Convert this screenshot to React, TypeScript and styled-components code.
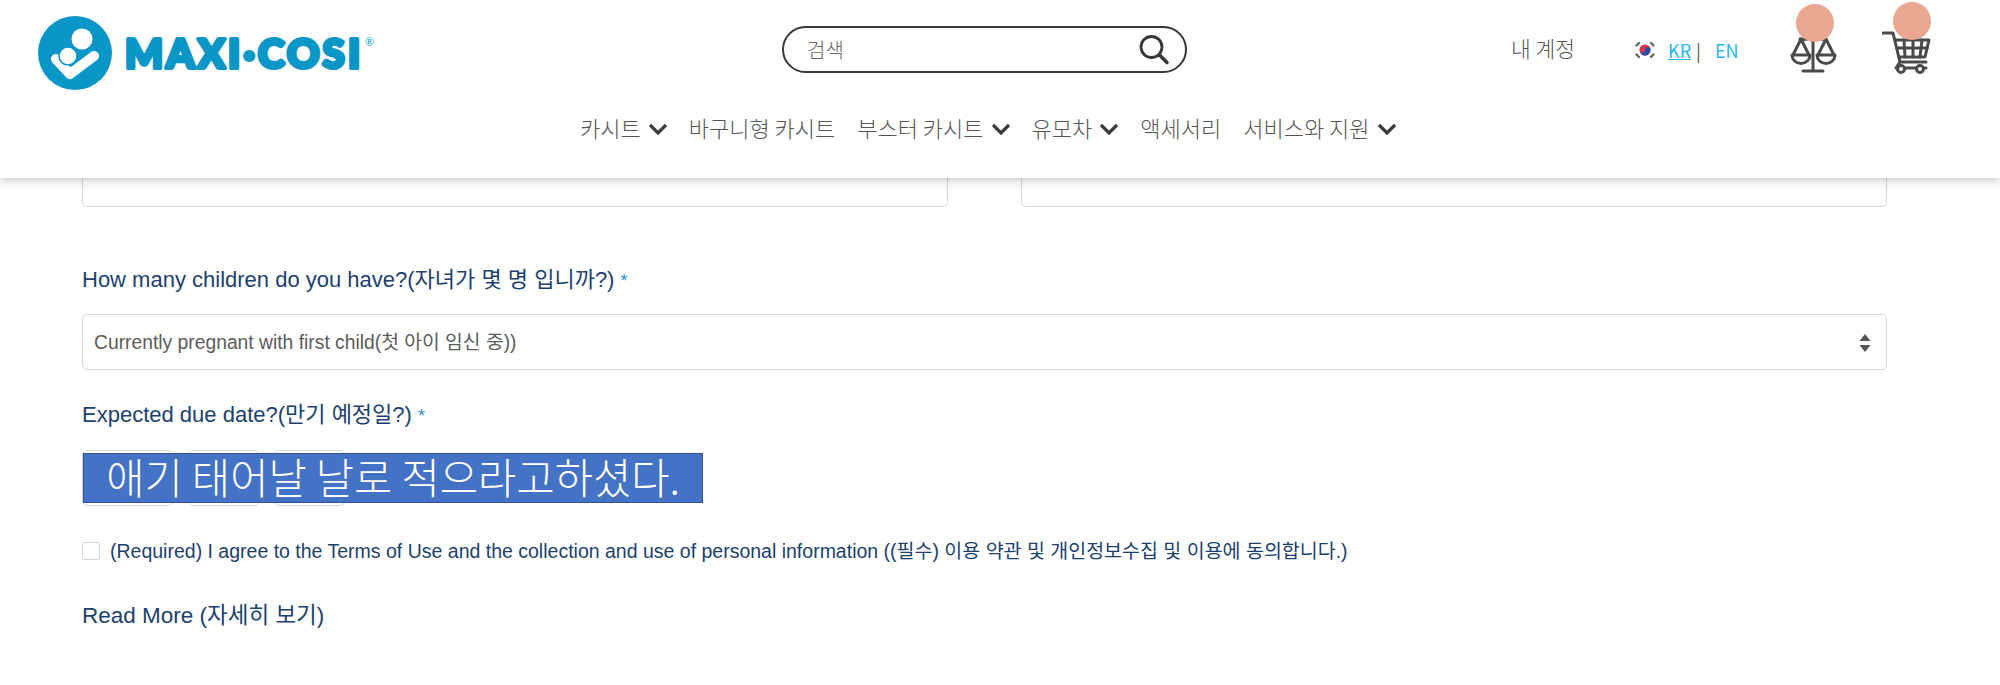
import React from 'react';
import styled, { createGlobalStyle } from 'styled-components';

const GlobalStyle = createGlobalStyle`
  html, body {
    margin: 0;
    padding: 0;
    background: #fff;
  }
  body {
    font-family: "Liberation Sans", "Noto Sans CJK KR", sans-serif;
  }
`;

const Header = styled.header`
  position: relative;
  z-index: 2;
  height: 178px;
  background: #fff;
  box-shadow: 0 2px 10px rgba(0, 0, 0, 0.25);
`;

const TopRow = styled.div`
  display: flex;
  align-items: flex-start;
  height: 104px;
`;

const LogoLink = styled.a`
  display: block;
  width: 782px;
  height: 100px;
  flex: none;
`;

const SearchBox = styled.div`
  display: flex;
  align-items: center;
  justify-content: space-between;
  box-sizing: border-box;
  width: 405px;
  height: 47px;
  margin-top: 26px;
  padding: 0 15px 0 23px;
  border: 2.5px solid #383838;
  border-radius: 24px;
  flex: none;
`;

const SearchText = styled.span`
  font: 300 20px "Noto Sans CJK KR", sans-serif;
  color: #666;
`;

const Account = styled.a`
  margin: 32px 0 0 324px;
  width: 123px;
  flex: none;
  font: 300 21.5px/32px "Noto Sans CJK KR", sans-serif;
  color: #555;
`;

const LangGroup = styled.div`
  display: flex;
  align-items: center;
  width: 156px;
  height: 32px;
  margin-top: 34px;
  flex: none;
  font: 400 18px "Noto Sans CJK KR", sans-serif;
  color: #29b6f0;
`;

const LangLink = styled.a<{ $current?: boolean }>`
  text-decoration: ${({ $current }) => ($current ? 'underline' : 'none')};
  margin-left: ${({ $current }) => ($current ? '12px' : '14px')};
`;

const LangSep = styled.span`
  color: #555;
  margin-left: 5px;
`;

const IconLink = styled.a`
  position: relative;
  display: block;
  width: 92px;
  height: 42px;
  margin-top: 31px;
  flex: none;
`;

const Badge = styled.span<{ $left: number; $top: number }>`
  position: absolute;
  left: ${({ $left }) => $left}px;
  top: ${({ $top }) => $top}px;
  width: 38px;
  height: 38px;
  border-radius: 50%;
  background: #e9a691;
`;

const NavRow = styled.nav`
  display: flex;
  align-items: center;
  gap: 22px;
  padding-left: 580px;
  height: 46px;
`;

const NavItem = styled.a`
  display: flex;
  align-items: center;
  gap: 8px;
  font: 300 22px "Noto Sans CJK KR", sans-serif;
  color: #555;
  white-space: nowrap;
`;

const NavChevron = styled.svg`
  margin-top: 4px;
`;

const Form = styled.main`
  padding: 0 113px 0 82px;
`;

const TwoCols = styled.div`
  display: grid;
  grid-template-columns: 866px 866px;
  gap: 73px;
`;

const ClippedInput = styled.div`
  height: 29px;
  box-sizing: border-box;
  border: 1px solid #d3d8de;
  border-top: none;
  border-radius: 0 0 5px 5px;
`;

const Label = styled.label<{ $top: number }>`
  display: block;
  margin-top: ${({ $top }) => $top}px;
  font-size: 22px;
  line-height: 26px;
  color: #1c3f6e;
`;

const Required = styled.span`
  color: #2a93c4;
  margin-left: 6px;
  font-size: 18px;
`;

const SelectBox = styled.div`
  position: relative;
  display: flex;
  align-items: center;
  box-sizing: border-box;
  height: 56px;
  margin-top: 20px;
  padding: 0 0 3px 11px;
  border: 1px solid #d3d8de;
  border-radius: 5px;
  font-size: 19.3px;
  color: #5c5c5c;
`;

const Stepper = styled.svg`
  position: absolute;
  right: 15px;
  top: 18px;
`;

const DateRow = styled.div`
  position: relative;
  display: flex;
  gap: 15px;
  margin-top: 21px;
`;

const DateInput = styled.div<{ $width: number }>`
  width: ${({ $width }) => $width}px;
  height: 56px;
  box-sizing: border-box;
  border: 1px solid #d3d8de;
  border-radius: 5px;
`;

const Callout = styled.div`
  position: absolute;
  left: 1px;
  top: 3px;
  box-sizing: border-box;
  width: 620px;
  height: 50px;
  background: #4472c4;
  border: 1.5px solid #2f528f;
  color: #fff;
  font: 300 41.6px/44px "Noto Sans CJK KR", sans-serif;
  text-align: center;
  white-space: nowrap;
`;

const AgreeRow = styled.div`
  display: flex;
  align-items: center;
  gap: 10px;
  margin-top: 32px;
  font-size: 19.5px;
  line-height: 26px;
  white-space: nowrap;
  color: #1c3f6e;
`;

const CheckBox = styled.span`
  width: 18px;
  height: 18px;
  flex: none;
  box-sizing: border-box;
  border: 1px solid #d3d8de;
  border-radius: 2px;
`;

const ReadMore = styled.a`
  display: block;
  margin-top: 39px;
  font-size: 22.5px;
  line-height: 26px;
  color: #1c3f6e;
`;

const Logo = () => (
  <svg width="400" height="100" viewBox="0 0 400 100">
    <circle cx="75" cy="53" r="37" fill="#0a96c6" />
    <circle cx="82" cy="39" r="10.5" fill="#fff" />
    <path d="M56 59 L70 74 L94 56" fill="none" stroke="#fff" strokeWidth="10" strokeLinecap="round" strokeLinejoin="round" />
    <circle cx="68" cy="56" r="9" fill="#fff" stroke="#0a96c6" strokeWidth="1.5" />
    <text
      x="125"
      y="68"
      fontFamily="Lato, sans-serif"
      fontWeight="900"
      fontSize="40"
      fill="#0a96c6"
      stroke="#0a96c6"
      strokeWidth="4"
      strokeLinejoin="round"
      textLength="235"
      lengthAdjust="spacing"
    >
      MAXI·COSI
    </text>
    <text x="365" y="46" fontFamily="Lato, sans-serif" fontSize="11" fill="#0a96c6">®</text>
  </svg>
);

const SearchIcon = () => (
  <svg width="32" height="32" viewBox="0 0 32 32" fill="none" stroke="#383838" strokeLinecap="round">
    <circle cx="13.5" cy="13" r="10.5" strokeWidth="2.8" />
    <path d="M21.5 21 L29 28.5" strokeWidth="3.6" />
  </svg>
);

const Flag = () => (
  <svg width="22" height="20" viewBox="0 0 22 20">
    <circle cx="11" cy="10" r="5.5" fill="#d8344a" />
    <path d="M5.5 10 a5.5 5.5 0 0 0 11 0 a2.75 2.75 0 0 0 -5.5 0 a2.75 2.75 0 0 1 -5.5 0z" fill="#1f4ea1" />
    <g stroke="#666" strokeWidth="2.4" strokeLinecap="round">
      <path d="M2.5 5.5 L5 3" />
      <path d="M17 3 L19.5 5.5" />
      <path d="M2.5 14.5 L5 17" />
      <path d="M17 17 L19.5 14.5" />
    </g>
  </svg>
);

const ScaleIcon = () => (
  <svg width="50" height="42" viewBox="0 0 50 42" fill="none" stroke="#4a4a4a" strokeWidth="3" strokeLinecap="round" strokeLinejoin="round">
    <path d="M23 2 V40 M13 40 H33" />
    <path d="M10 8 C16 9 20 8 23 6 C26 8 30 9 36 8" />
    <path d="M11 8 L3 24 M11 8 L19 24 M36 8 L28 24 M36 8 L44 24" />
    <path d="M2 24 H20 A9 8.5 0 0 1 2 24Z M27 24 H45 A9 8.5 0 0 1 27 24Z" />
    <circle cx="23" cy="7" r="2.5" fill="#4a4a4a" />
  </svg>
);

const CartIcon = () => (
  <svg width="50" height="44" viewBox="0 0 50 44" fill="none" stroke="#4a4a4a" strokeWidth="3" strokeLinecap="round" strokeLinejoin="round">
    <path d="M1 2 H11 L18 31 H44" />
    <path d="M13 9 H47 L43 26 H17" />
    <path d="M22 9 L23 26 M31 9 V26 M40 9 L38 26 M15 17 H45" />
    <path d="M18 31 L14 37 H44" />
    <circle cx="19" cy="38" r="3.5" fill="#fff" />
    <circle cx="38" cy="38" r="3.5" fill="#fff" />
  </svg>
);

const Chevron = () => (
  <NavChevron width="18" height="12" viewBox="0 0 18 12" fill="none" stroke="#3a3a3a" strokeWidth="3.2">
    <path d="M1 2 L9 10 L17 2" />
  </NavChevron>
);

const navItems = [
  { name: '카시트', sub: true },
  { name: '바구니형 카시트', sub: false },
  { name: '부스터 카시트', sub: true },
  { name: '유모차', sub: true },
  { name: '액세서리', sub: false },
  { name: '서비스와 지원', sub: true },
];

const App: React.FC = () => {
  return (
    <div>
      <GlobalStyle />
      <Header>
        <TopRow>
          <LogoLink><Logo /></LogoLink>
          <SearchBox>
            <SearchText>검색</SearchText>
            <SearchIcon />
          </SearchBox>
          <Account>내 계정</Account>
          <LangGroup>
            <Flag />
            <LangLink $current>KR</LangLink>
            <LangSep>|</LangSep>
            <LangLink>EN</LangLink>
          </LangGroup>
          <IconLink>
            <ScaleIcon />
            <Badge $left={6} $top={-27} />
          </IconLink>
          <IconLink>
            <CartIcon />
            <Badge $left={11} $top={-29} />
          </IconLink>
        </TopRow>
        <NavRow>
          {navItems.map((item) => (
            <NavItem key={item.name}>
              {item.name}
              {item.sub && <Chevron />}
            </NavItem>
          ))}
        </NavRow>
      </Header>
      <Form>
        <TwoCols>
          <ClippedInput />
          <ClippedInput />
        </TwoCols>
        <Label $top={60}>
          How many children do you have?(자녀가 몇 명 입니까?)<Required>*</Required>
        </Label>
        <SelectBox>
          Currently pregnant with first child(첫 아이 임신 중))
          <Stepper width="12" height="20" viewBox="0 0 12 20" fill="#555">
            <path d="M6 1 L11.5 8 H0.5Z M0.5 12 H11.5 L6 19Z" />
          </Stepper>
        </SelectBox>
        <Label $top={32}>
          Expected due date?(만기 예정일?)<Required>*</Required>
        </Label>
        <DateRow>
          <DateInput $width={91} />
          <DateInput $width={71} />
          <DateInput $width={71} />
          <Callout>애기 태어날 날로 적으라고하셨다.</Callout>
        </DateRow>
        <AgreeRow>
          <CheckBox />
          (Required) I agree to the Terms of Use and the collection and use of personal information ((필수) 이용 약관 및 개인정보수집 및 이용에 동의합니다.)
        </AgreeRow>
        <ReadMore>Read More (자세히 보기)</ReadMore>
      </Form>
    </div>
  );
};

export default App;
